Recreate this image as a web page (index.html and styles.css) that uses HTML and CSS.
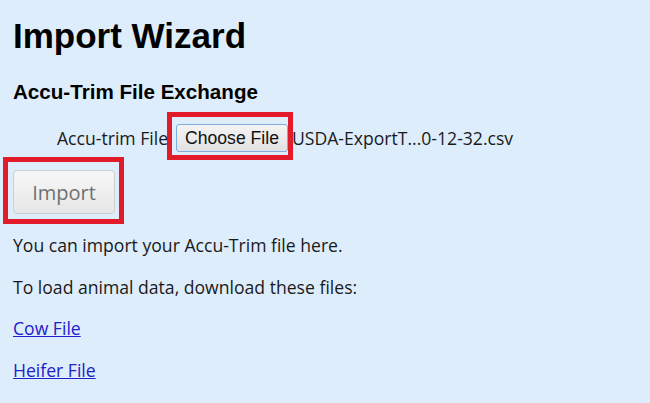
FILE: index.html
```html
<!DOCTYPE html>
<html lang="en">
<head>
<meta charset="utf-8">
<title>Import Wizard</title>
<link rel="stylesheet" href="styles.css">
</head>
<body>
<main class="page">
  <h1 class="title">Import Wizard</h1>
  <h2 class="subtitle">Accu-Trim File Exchange</h2>
  <div class="file-row">
    <label class="file-label">Accu-trim File</label>
    <span class="mark mark-choose"><button class="choose-btn" type="button">Choose File</button></span>
    <span class="file-name">USDA-ExportT...0-12-32.csv</span>
  </div>
  <div class="import-row">
    <span class="mark mark-import"><button class="import-btn" type="button" disabled>Import</button></span>
  </div>
  <p class="text">You can import your Accu-Trim file here.</p>
  <p class="text">To load animal data, download these files:</p>
  <p class="text"><a class="link" href="#">Cow File</a></p>
  <p class="text"><a class="link" href="#">Heifer File</a></p>
</main>
</body>
</html>
```

FILE: styles.css
```css
html, body {
  margin: 0;
  padding: 0;
  background: #deedfb;
}
body {
  font-family: "Open Sans", "Liberation Sans", sans-serif;
  color: #1a1a1a;
}
.page {
  padding: 0 13px;
}
.title {
  font-family: "Liberation Sans", Arial, sans-serif;
  font-weight: bold;
  font-size: 35px;
  line-height: 39px;
  margin: 16px 0 0;
  color: #000;
}
.subtitle {
  font-family: "Liberation Sans", Arial, sans-serif;
  font-weight: bold;
  font-size: 20.6px;
  line-height: 23px;
  margin: 25px 0 0;
  color: #000;
}
.file-row {
  display: flex;
  align-items: center;
  margin: 21px 0 0 44px;
  font-size: 17.6px;
}
.file-label {
  margin-right: 8px;
}
.mark {
  position: relative;
  display: inline-flex;
}
.mark::after {
  content: "";
  position: absolute;
  border: 5px solid #e21b2b;
  pointer-events: none;
}
.mark-choose::after {
  left: -9px;
  right: -5px;
  top: -12px;
  bottom: -8px;
}
.mark-import::after {
  left: -10px;
  right: -9px;
  top: -13px;
  bottom: -10px;
}
.choose-btn {
  font-family: "Liberation Sans", Arial, sans-serif;
  font-size: 17.6px;
  line-height: 20px;
  height: 28px;
  padding: 3px 8px;
  margin: 0;
  color: #111;
  background: linear-gradient(#f4f4f4, #e2e2e2);
  border: 1px solid #7eaede;
  border-radius: 3px;
}
.file-name {
  margin-left: 4px;
}
.import-row {
  display: flex;
  margin-top: 18px;
}
.import-btn {
  font-family: "Open Sans", "Liberation Sans", sans-serif;
  font-size: 20px;
  line-height: 24px;
  height: 44px;
  width: 102px;
  padding: 10px 0 8px;
  margin: 0;
  color: #707070;
  background: linear-gradient(#f6f6f6 0%, #efefef 50%, #e6e6e6 100%);
  border: 1px solid #cfcfcf;
  border-radius: 4px;
}
.text {
  font-size: 17.6px;
  line-height: 25.6px;
  margin: 16px 0 0;
}
.import-row + .text {
  margin-top: 19px;
}
.link {
  color: #2020cc;
  text-decoration: underline;
}
```
